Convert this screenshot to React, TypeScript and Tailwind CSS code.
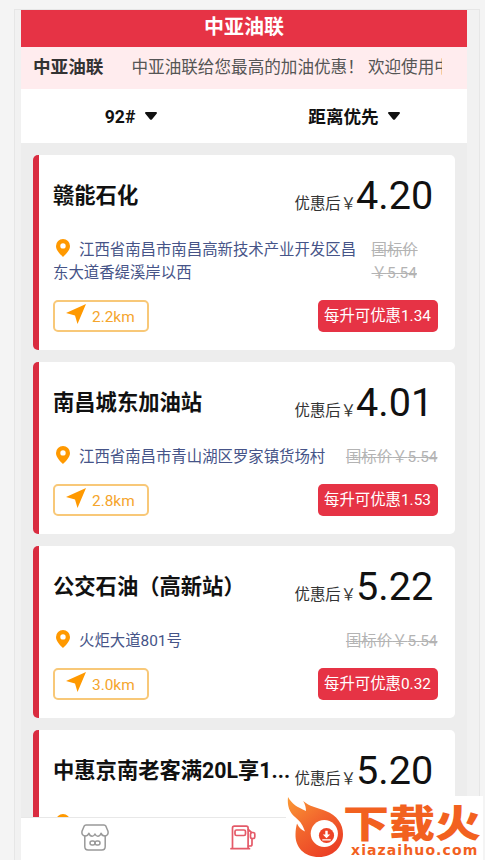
import React from 'react';

interface Station {
  id: number;
  name: string;
  address: string;
  price: string;
  listPrice: string;
  saving: string;
  distance: string;
  narrowPrice?: boolean;
}

const stations: Station[] = [
  { id: 1, name: '赣能石化', address: '江西省南昌市南昌高新技术产业开发区昌东大道香缇溪岸以西', price: '4.20', listPrice: '5.54', saving: '1.34', distance: '2.2km', narrowPrice: true },
  { id: 2, name: '南昌城东加油站', address: '江西省南昌市青山湖区罗家镇货场村', price: '4.01', listPrice: '5.54', saving: '1.53', distance: '2.8km' },
  { id: 3, name: '公交石油（高新站）', address: '火炬大道801号', price: '5.22', listPrice: '5.54', saving: '0.32', distance: '3.0km' },
  { id: 4, name: '中惠京南老客满20L享1...', address: '', price: '5.20', listPrice: '', saving: '', distance: '' },
];

const PinIcon = () => (
  <svg viewBox="0 0 14 18" className="inline-block w-[14px] h-[18px] ml-[3px] mr-[9px] align-[-2px]" fill="#ff9900">
    <path fillRule="evenodd" d="M7 0a7 7 0 0 0-7 7c0 4.600 4.600 8.600 7 11 2.400-2.400 7-6.400 7-11a7 7 0 0 0-7-7Zm0 4.200a2.700 2.700 0 1 1 0 5.400 2.700 2.700 0 0 1 0-5.400Z" />
  </svg>
);

const ArrowIcon = () => (
  <svg viewBox="0 0 20 20" className="w-5 h-5 shrink-0" fill="#ff9900">
    <path d="M20 0 11.500 20 9 11.400 0 9Z" />
  </svg>
);

const Caret = () => (
  <svg viewBox="0 0 12 8" className="w-3 h-2" fill="#111">
    <path d="M1.200 0h9.600c1 0 1.500 1 .8 1.800L6.900 7.400c-.5.6-1.300.6-1.800 0L.4 1.800C-.3 1 .2 0 1.200 0Z" />
  </svg>
);

const StationCard: React.FC<{ station: Station }> = ({ station }) => (
  <div className="shrink-0 bg-white rounded-[5px] border-l-[6px] border-[#d92c40] pl-[14.5px] pr-[17.5px] pb-[18px]">
    <div className="flex items-start justify-between h-[83px]">
      <h3 className="text-[21.3px] leading-8 font-bold text-[#111] whitespace-nowrap pt-[25px]">{station.name}</h3>
      <div className="w-[143px] shrink-0 flex items-baseline whitespace-nowrap pt-[17px] text-[#111]">
        <span className="text-[15.4px] text-[#333]">优惠后￥</span>
        <span className="text-[39.6px] leading-[47px]">{station.price}</span>
      </div>
    </div>

    <div className="flex justify-between min-h-[22.5px] text-[15.4px] leading-[22.5px]">
      <div className="max-w-[306px] text-[#465488] relative top-px">
        <PinIcon />
        {station.address}
      </div>
      {station.listPrice && (
        <div className={`shrink-0 text-[#b3b3b3] line-through relative top-px ${station.narrowPrice ? 'w-[66px]' : ''}`}>
          国标价<wbr />￥{station.listPrice}
        </div>
      )}
    </div>

    <div className="flex items-center justify-between mt-[17px] h-8 text-[15.4px]">
      <div className="w-[95.5px] h-full flex items-center border-2 border-[#f8c878] rounded-[5px] pl-[11px] gap-[6px] text-[#f5a52c]">
        <div className="-mt-1"><ArrowIcon /></div>
        <span className="pt-[3px]">{station.distance}</span>
      </div>
      <div className="w-[120px] h-full flex items-center justify-center rounded-[5px] bg-[#e63345] text-white whitespace-nowrap">
        <span className="pt-px">每升可优惠{station.saving}</span>
      </div>
    </div>
  </div>
);

const ShopIcon = () => (
  <svg viewBox="0 0 28 27" className="w-7 h-[27px]" fill="none" stroke="#999" strokeWidth="1.5" strokeLinejoin="round" strokeLinecap="round">
    <path d="M5 1h18c1 0 1.500.4 1.900 1.200L27 7.300c.5 2.600-.9 4.700-3.100 4.700-1.800 0-3.300-1-3.800-2.700-.7 1.900-1.800 3-3.300 3-1.300 0-2.200-.9-2.800-2.300-.7 1.400-1.600 2.300-2.800 2.300-1.600 0-2.700-1.100-3.300-3C7.200 11 5.800 12 4.100 12 1.900 12 .5 9.900 1 7.300l2.100-5.100C3.500 1.400 4 1 5 1Z" />
    <path d="M3.800 12v10.500c0 2 1.200 3.500 3.300 3.500h13.800c2.100 0 3.300-1.500 3.300-3.500V12" />
    <rect x="9" y="17" width="5" height="4" rx="2" />
    <rect x="14" y="17" width="5" height="4" rx="2" />
  </svg>
);

const PumpIcon = () => (
  <svg viewBox="0 0 26 26" className="w-[26px] h-[26px]" fill="none" stroke="#e45a68" strokeWidth="1.7" strokeLinejoin="round" strokeLinecap="round">
    <path d="M2.500 23.500V3c0-1.200.6-1.800 1.800-1.800h12c1.200 0 1.800.6 1.800 1.800v20.500M1 23.700h18.500" />
    <rect x="5" y="5" width="10.500" height="5.500" rx="1.500" />
    <path d="m18.200 4.500 3.300 3M18.200 21h2c1.200 0 1.800-.6 1.800-1.800v-5.500" />
    <rect x="20.500" y="7.500" width="4.300" height="6" rx="1.800" />
  </svg>
);

const FlameLogo = () => (
  <svg viewBox="0 0 58 62" className="w-[58px] h-[62px] shrink-0">
    <defs>
      <linearGradient id="flame" x1="0" y1="0" x2=".7" y2="1">
        <stop offset="0" stopColor="#fb9a35" />
        <stop offset=".5" stopColor="#f2662d" />
        <stop offset="1" stopColor="#eb3f25" />
      </linearGradient>
    </defs>
    <path fill="url(#flame)" d="M1 0c4 7 9 10 18 14-.1-3.500-.8-6.500-2.800-10 6 5.500 14 6.500 22.500 10C50 18.500 56 27 56 37c0 13-10 23-24 23C17 60 8 50 8.500 37c.1-4 .6-7 1.500-10.500 1.600 3.600 4 6.500 8 8C15.500 28 14.500 25.500 8 20 2.500 15.500 0 9 1 0Z" />
    <circle cx="37.300" cy="36.500" r="13.600" fill="#fff" />
    <circle cx="39.500" cy="38.500" r="7.600" fill="#ed4427" />
    <path d="M38.300 33.800h2.400v3.600h2.500l-3.700 3.800-3.700-3.800h2.500ZM35.300 42.200h8.400v1.400h-8.400Z" fill="#fff" />
  </svg>
);

export default function App() {
  return (
    <div className="h-[860px] w-[485px] overflow-hidden relative bg-[#f4f4f4] pt-[9px] pl-[14px] pr-[5px] font-[Roboto,'Noto_Sans_CJK_SC',sans-serif]">
      <div className="h-full border border-b-0 border-[#e6e6e6] bg-[#f1f1f1] pl-[6px] pr-3">
        <div className="h-full flex flex-col bg-[#ededed]">
          <header className="h-[37px] shrink-0 bg-[#e63345] text-white text-[20px] leading-[34px] font-bold text-center">
            中亚油联
          </header>

          <div className="h-[42px] shrink-0 flex items-center bg-[#ffecee] pl-3 pr-[25px]">
            <span className="w-[98.5px] shrink-0 text-[17.6px] font-bold text-[#333] -mt-px">中亚油联</span>
            <div className="flex-1 overflow-hidden whitespace-pre text-[16.6px] text-[#555]">中亚油联给您最高的加油优惠！ 欢迎使用中</div>
          </div>

          <div className="h-[54px] shrink-0 flex items-center bg-white text-[17.6px] font-bold text-[#111] pt-[2px]">
            <div className="w-[220px] flex items-center justify-center gap-[10px]">
              92#
              <div className="-mt-[2px]"><Caret /></div>
            </div>
            <div className="flex-1 flex items-center justify-center gap-[9px]">
              距离优先
              <div className="-mt-[2px]"><Caret /></div>
            </div>
          </div>

          <main className="flex-1 min-h-0 overflow-hidden flex flex-col gap-[11.5px] pt-3 pl-[11.5px] pr-3">
            {stations.map((station) => (
              <StationCard key={station.id} station={station} />
            ))}
          </main>

          <nav className="h-[43px] shrink-0 flex bg-white border-t border-[#e8e8e8]">
            <div className="w-[148px] flex justify-center pt-[6px]">
              <ShopIcon />
            </div>
            <div className="w-[148px] flex justify-center pt-[7px]">
              <PumpIcon />
            </div>
          </nav>
        </div>
      </div>

      <div className="absolute left-[286px] top-[796px] w-[197px] h-[64px] bg-white flex pl-[1px] pt-[1px]">
        <FlameLogo />
        <div className="text-[#f2611f] whitespace-nowrap">
          <div className="text-[38px] leading-[46px] h-[46px] font-black pt-[4px] -ml-[2px] origin-left scale-x-[1.21]">下载火</div>
          <div className="font-['DejaVu_Sans'] text-[14px] leading-[15px] font-bold tracking-[1.1px] pl-[6px]">xiazaihuo.com</div>
        </div>
      </div>
    </div>
  );
}
